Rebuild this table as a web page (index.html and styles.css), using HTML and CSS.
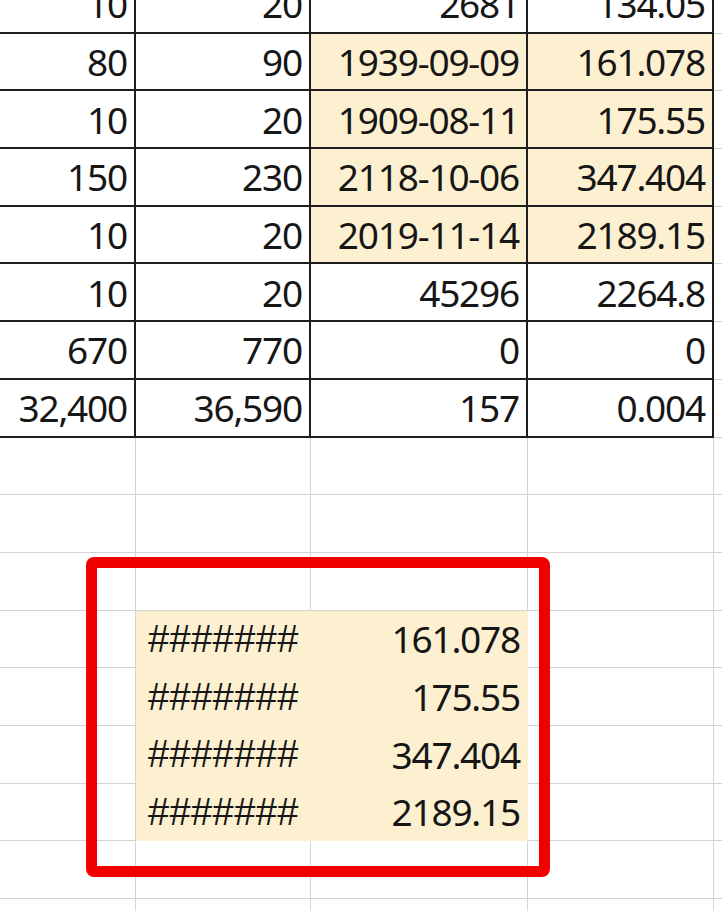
FILE: index.html
```html
<!DOCTYPE html>
<html lang="ko">
<head>
<meta charset="utf-8">
<title>Sheet</title>
<link rel="stylesheet" href="styles.css">
</head>
<body>
<div class="page">
  <table class="sheet">
    <colgroup>
      <col class="c0"><col class="c1"><col class="c2"><col class="c3"><col class="c4">
    </colgroup>
    <tbody>
      <tr><td class="k">10</td><td class="k">20</td><td class="k">2681</td><td class="k">134.05</td><td></td></tr>
      <tr><td class="k">80</td><td class="k">90</td><td class="k hl">1939-09-09</td><td class="k hl">161.078</td><td></td></tr>
      <tr><td class="k">10</td><td class="k">20</td><td class="k hl">1909-08-11</td><td class="k hl">175.55</td><td></td></tr>
      <tr><td class="k">150</td><td class="k">230</td><td class="k hl">2118-10-06</td><td class="k hl">347.404</td><td></td></tr>
      <tr><td class="k">10</td><td class="k">20</td><td class="k hl">2019-11-14</td><td class="k hl">2189.15</td><td></td></tr>
      <tr><td class="k">10</td><td class="k">20</td><td class="k">45296</td><td class="k">2264.8</td><td></td></tr>
      <tr><td class="k">670</td><td class="k">770</td><td class="k">0</td><td class="k">0</td><td></td></tr>
      <tr><td class="k">32,400</td><td class="k">36,590</td><td class="k">157</td><td class="k">0.004</td><td></td></tr>
      <tr><td></td><td></td><td></td><td></td><td></td></tr>
      <tr><td></td><td></td><td></td><td></td><td></td></tr>
      <tr><td></td><td></td><td></td><td></td><td></td></tr>
      <tr><td></td><td class="fill hash">#######</td><td class="fill">161.078</td><td></td><td></td></tr>
      <tr><td></td><td class="fill hash">#######</td><td class="fill">175.55</td><td></td><td></td></tr>
      <tr><td></td><td class="fill hash">#######</td><td class="fill">347.404</td><td></td><td></td></tr>
      <tr><td></td><td class="fill hash">#######</td><td class="fill">2189.15</td><td></td><td></td></tr>
      <tr><td></td><td></td><td></td><td></td><td></td></tr>
      <tr><td></td><td></td><td></td><td></td><td></td></tr>
    </tbody>
  </table>
  <div class="mark"></div>
</div>
</body>
</html>
```

FILE: styles.css
```css
html, body {
  margin: 0;
  padding: 0;
  background: #ffffff;
  overflow: hidden;
}

.page {
  position: relative;
  width: 722px;
  height: 911px;
  overflow: hidden;
}

.sheet {
  border-collapse: separate;
  border-spacing: 0;
  table-layout: fixed;
  width: 854px;
  margin: -24px 0 0 -40px;
  font-family: "Noto Sans", "Noto Sans CJK KR", sans-serif;
  font-size: 37px;
  letter-spacing: -1.2px;
  color: #161616;
}

.c0 { width: 176px; }
.c1 { width: 175px; }
.c2 { width: 217px; }
.c3 { width: 186px; }
.c4 { width: 100px; }

.sheet tr {
  height: 57.7px;
}

.sheet td {
  box-sizing: border-box;
  padding: 0 6px 0 0;
  text-align: right;
  vertical-align: middle;
  white-space: nowrap;
  overflow: hidden;
  line-height: 1;
  border-right: 1px solid #d3d3d3;
  border-bottom: 1px solid #d3d3d3;
}

.sheet td.k {
  border-right: 2px solid #1e1e1e;
  border-bottom: 2px solid #1e1e1e;
  padding-right: 7px;
}

.sheet td.hl {
  background: #fdf0d1;
}

.sheet td.fill {
  background: #fdf0d1;
  border-color: #fdf0d1;
  padding-right: 7px;
}

.sheet td.hash {
  text-align: left;
  padding-left: 12px;
  font-family: "Liberation Sans", sans-serif;
  font-size: 38px;
  letter-spacing: 0.4px;
}

.mark {
  position: absolute;
  left: 86px;
  top: 557px;
  width: 464px;
  height: 320px;
  box-sizing: border-box;
  border: 11px solid #f20000;
  border-radius: 8px;
}
```
